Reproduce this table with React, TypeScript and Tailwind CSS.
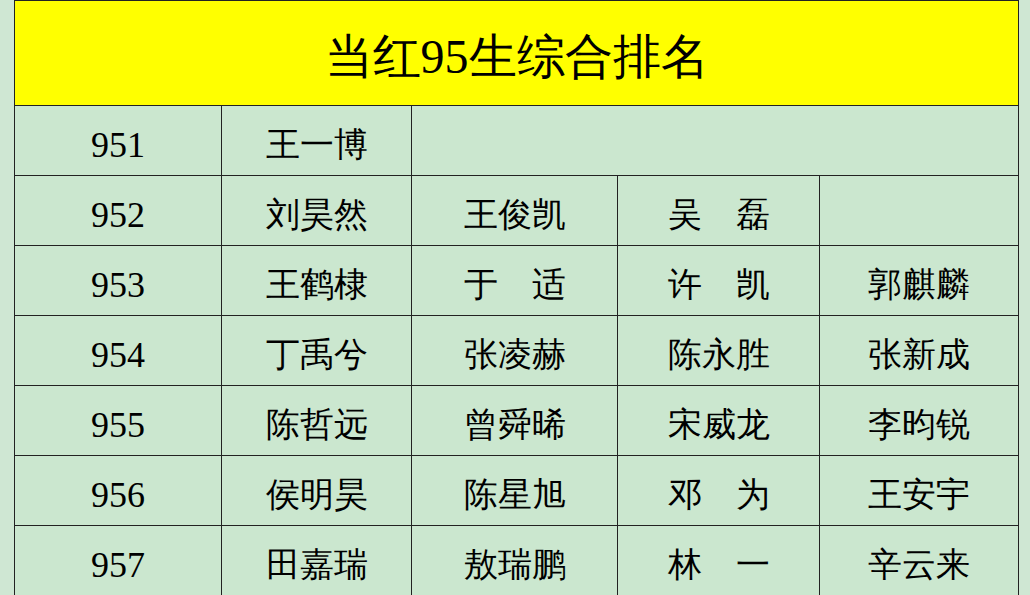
import React from 'react';

const ROWS: { id: string; names: string[] }[] = [
  { id: '951', names: ['王一博'] },
  { id: '952', names: ['刘昊然', '王俊凯', '吴　磊', ''] },
  { id: '953', names: ['王鹤棣', '于　适', '许　凯', '郭麒麟'] },
  { id: '954', names: ['丁禹兮', '张凌赫', '陈永胜', '张新成'] },
  { id: '955', names: ['陈哲远', '曾舜晞', '宋威龙', '李昀锐'] },
  { id: '956', names: ['侯明昊', '陈星旭', '邓　为', '王安宇'] },
  { id: '957', names: ['田嘉瑞', '敖瑞鹏', '林　一', '辛云来'] },
];

export default function App() {
  return (
    <div className="w-[1030px] h-[595px] overflow-hidden bg-[#cfe7d3] pl-[14px] font-serif">
      <table className="border-collapse table-fixed text-black font-serif">
        <colgroup>
          <col className="w-[207px]" />
          <col className="w-[190px]" />
          <col className="w-[206px]" />
          <col className="w-[202px]" />
          <col className="w-[199px]" />
        </colgroup>
        <tbody>
          <tr className="h-[105px]">
            <td colSpan={5} className="bg-[#ffff00] border-[1.5px] border-[#222] text-center text-[48px] leading-none pt-2 font-['Liberation_Serif',serif]">
              当红95生综合排名
            </td>
          </tr>
          {ROWS.map((row) => (
            <tr key={row.id} className="h-[70px]">
              <td className="bg-[#cbe7cf] border-[1.5px] border-[#222] text-center text-[36px] leading-none pt-2 font-['Liberation_Serif',serif]">
                {row.id}
              </td>
              {row.names.map((n, i) => (
                <td key={i} className="bg-[#cbe7cf] border-[1.5px] border-[#222] text-center text-[34px] leading-none pt-2">
                  {n}
                </td>
              ))}
              {row.names.length === 1 && (
                <td colSpan={3} className="bg-[#cbe7cf] border-[1.5px] border-[#222]" />
              )}
            </tr>
          ))}
        </tbody>
      </table>
    </div>
  );
}
